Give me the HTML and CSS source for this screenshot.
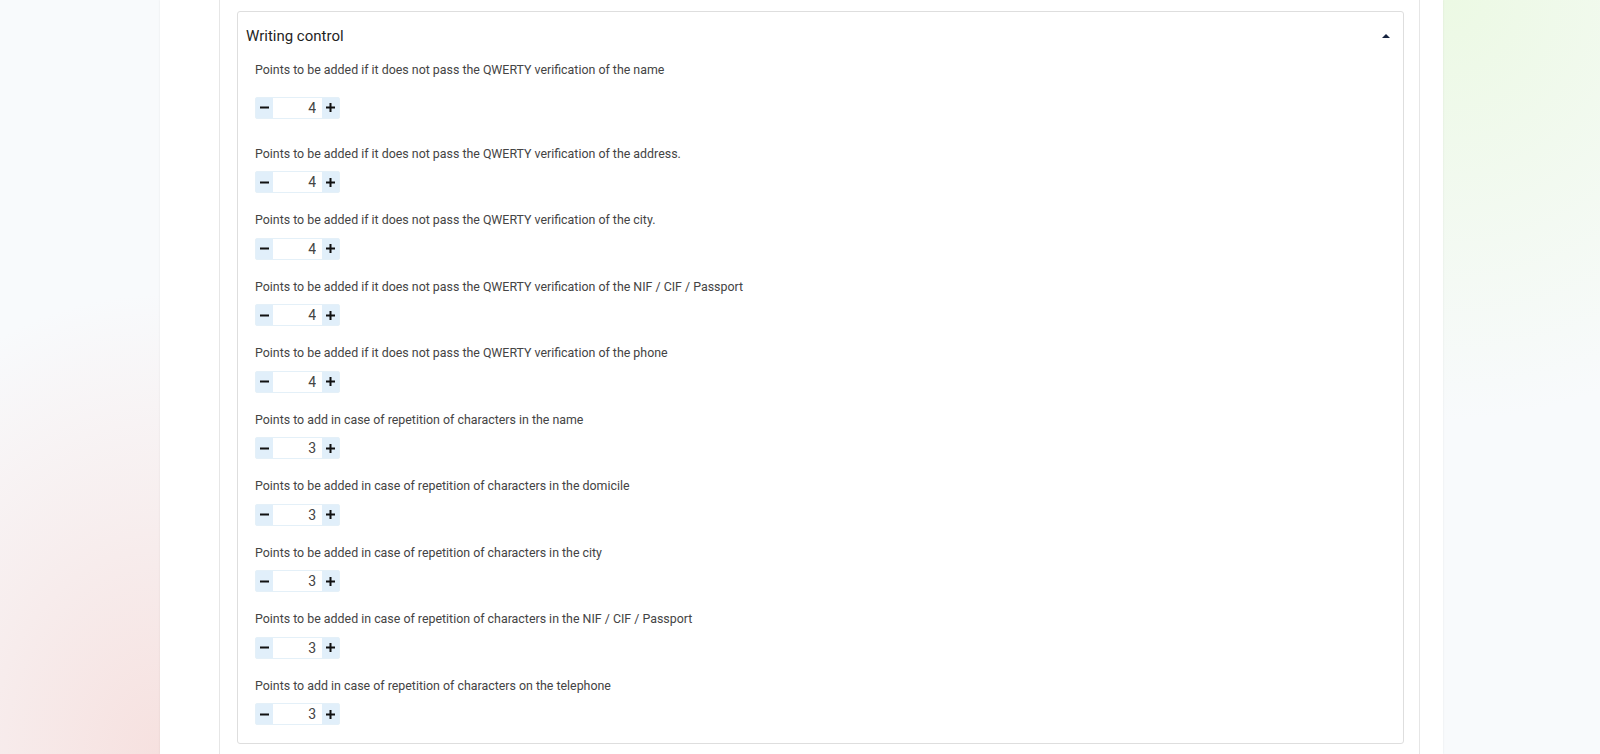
FILE: index.html
```html
<!DOCTYPE html>
<html lang="en">
<head>
  <meta charset="UTF-8" />
  <meta name="viewport" content="width=device-width, initial-scale=1.0" />
  <title>Writing control</title>

<link rel="stylesheet" href="styles.css">
</head>
<body>

<div class="sheet">
  <div class="column">

    <!-- writing control panel -->
    <section class="panel">
      <header class="panel-head">
        <h2>Writing control</h2>
        <span class="caret"></span>
      </header>

      <div class="panel-body" id="fields"></div>
    </section>

  </div>
</div>

<script>
/* ── fields ── */
const fields = [
  {label:'Points to be added if it does not pass the QWERTY verification of the name',          value:4},
  {label:'Points to be added if it does not pass the QWERTY verification of the address.',      value:4},
  {label:'Points to be added if it does not pass the QWERTY verification of the city.',         value:4},
  {label:'Points to be added if it does not pass the QWERTY verification of the NIF / CIF / Passport', value:4},
  {label:'Points to be added if it does not pass the QWERTY verification of the phone',         value:4},
  {label:'Points to add in case of repetition of characters in the name',                       value:3},
  {label:'Points to be added in case of repetition of characters in the domicile',              value:3},
  {label:'Points to be added in case of repetition of characters in the city',                  value:3},
  {label:'Points to be added in case of repetition of characters in the NIF / CIF / Passport',  value:3},
  {label:'Points to add in case of repetition of characters on the telephone',                  value:3}
];

const minusIcon = '<svg width="9" height="9" viewBox="0 0 9 9"><rect x="0" y="3.5" width="9" height="2" fill="currentColor"/></svg>';
const plusIcon  = '<svg width="9" height="9" viewBox="0 0 9 9"><rect x="0" y="3.5" width="9" height="2" fill="currentColor"/><rect x="3.5" y="0" width="2" height="9" fill="currentColor"/></svg>';

const body = document.getElementById('fields');
fields.forEach(({label, value}, i) => {
  const row = document.createElement('div');
  row.className = i === 0 ? 'field field-first' : 'field';
  row.innerHTML = `
    <label class="field-label">${label}</label>
    <div class="stepper">
      <button class="step" type="button">${minusIcon}</button>
      <input class="step-value" type="text" value="${value}" readonly>
      <button class="step" type="button">${plusIcon}</button>
    </div>`;
  body.appendChild(row);
});
</script>
</body>
</html>
```

FILE: styles.css
```css
  /* ─── page base ─────────────────────────────────────────── */
  html, body {
    height: 100%;
  }

  body {
    margin: 0;
    overflow: hidden;
    font-family: Roboto, "Liberation Sans", sans-serif;
    color: #3d3d3d;
    background:
      radial-gradient(ellipse 380px 460px at 160px 100%, rgba(246, 222, 220, 0.9), rgba(246, 222, 220, 0) 100%),
      radial-gradient(ellipse 420px 420px at 1450px 0, rgba(236, 249, 228, 1), rgba(236, 249, 228, 0) 100%),
      #f8fafc;
  }

  /* ─── white sheet ───────────────────────────────────────── */
  .sheet {
    margin-left: 160px;
    width: 1283px;
    height: 100%;
    background: #fff;
    box-shadow: 0 0 2px rgba(0, 0, 0, 0.08);
  }

  .column {
    box-sizing: border-box;
    margin-left: 59px;
    width: 1201px;
    height: 100%;
    padding: 11px 15px 0 17px;
    border-left: 1px solid #e6e6e6;
    border-right: 1px solid #e6e6e6;
  }

  /* ─── panel ─────────────────────────────────────────────── */
  .panel {
    border: 1px solid #dedede;
    border-radius: 3px;
  }

  .panel-head {
    display: flex;
    align-items: center;
    justify-content: space-between;
    padding: 13px 13px 0 8px;
  }

  .panel-head h2 {
    margin: 0;
    font-size: 15px;
    font-weight: 400;
    line-height: 22px;
    color: #1f1f1f;
  }

  .caret {
    width: 0;
    height: 0;
    border-left: 4px solid transparent;
    border-right: 4px solid transparent;
    border-bottom: 4px solid #16233f;
  }

  .panel-body {
    padding: 14px 17px 0;
  }

  /* ─── fields ────────────────────────────────────────────── */
  .field {
    padding-bottom: 18px;
  }

  .field-label {
    display: block;
    font-size: 12.4px;
    line-height: 18px;
    color: #444;
  }

  .stepper {
    display: flex;
    width: 85px;
    height: 22px;
    margin-top: 8.5px;
    box-sizing: border-box;
    border: 1px solid #e4f0f8;
    border-radius: 2px;
  }

  .field-first {
    padding-bottom: 26px;
  }

  .field-first .stepper {
    margin-top: 17.5px;
  }

  .step {
    display: flex;
    align-items: center;
    justify-content: center;
    width: 17px;
    padding: 0;
    border: 0;
    background: #e1effa;
    color: #111;
    cursor: pointer;
  }

  .step-value {
    flex: 1;
    min-width: 0;
    padding: 0 6px 0 0;
    border: 0;
    font: inherit;
    font-size: 14px;
    text-align: right;
    color: #444;
    background: #fff;
    outline: none;
  }
```
